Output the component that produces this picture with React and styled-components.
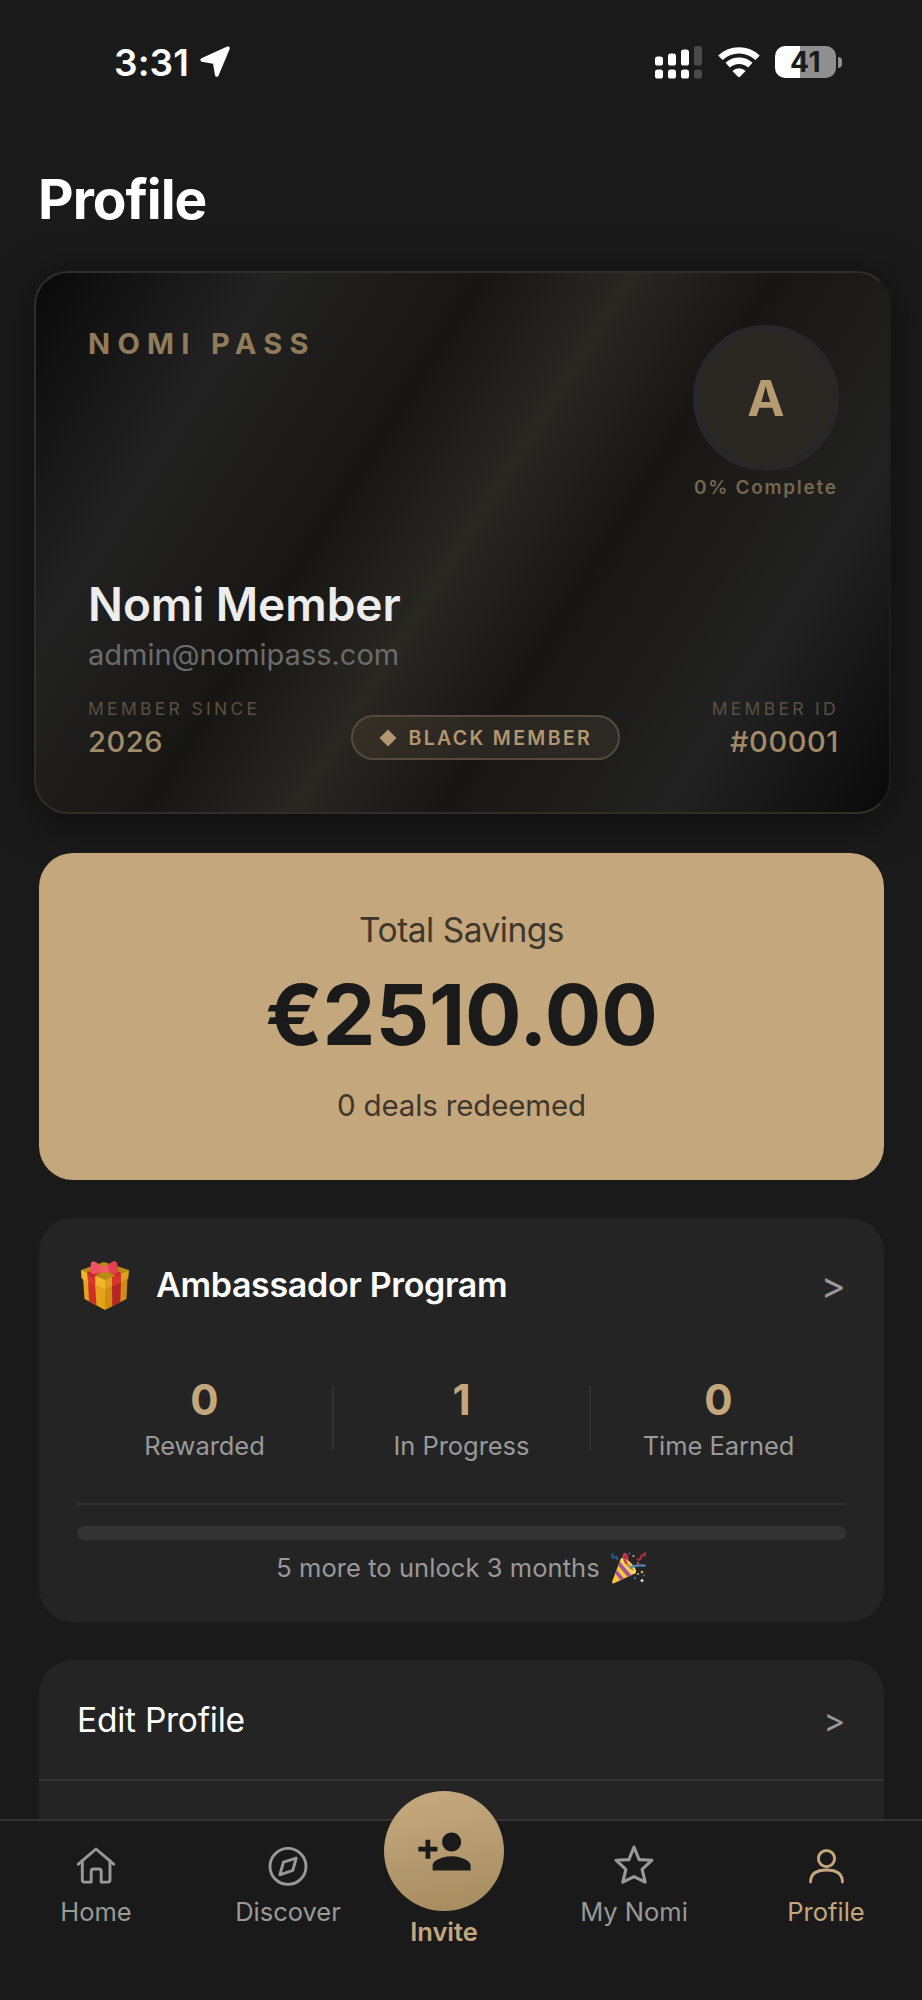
import React from "react";
import styled, { createGlobalStyle } from "styled-components";

const gold = "#c4a77d";

const GlobalStyle = createGlobalStyle`
  * { box-sizing: border-box; }
  body { margin: 0; background: #1a1a1a; }
`;

const Phone = styled.div`
  width: 922px;
  height: 2000px;
  display: flex;
  flex-direction: column;
  overflow: hidden;
  background: #1a1a1a;
  color: #fff;
  font-family: Inter, "Liberation Sans", sans-serif;
  white-space: nowrap;
`;

const Screen = styled.main`
  height: 1819px;
  flex: none;
  overflow: hidden;
`;

/* Status bar */
const StatusBar = styled.header`
  height: 124px;
  padding: 0 80px 0 114px;
  display: flex;
  align-items: center;
  justify-content: space-between;
`;

const StatusGroup = styled.div`
  display: flex;
  align-items: center;
  gap: ${(p) => p.$gap}px;
`;

const Clock = styled.span`
  padding-top: 2px;
  font-size: 37px;
  line-height: 44px;
  font-weight: 600;
  letter-spacing: 0.1px;
`;

const Battery = styled.div`
  display: flex;
  align-items: center;
  gap: 2px;
`;

const BatteryBody = styled.div`
  width: 61px;
  height: 32px;
  border-radius: 10px;
  background: linear-gradient(90deg, #fff 41%, #8f8f8f 41%);
  color: #1a1a1a;
  font-size: 28px;
  line-height: 32px;
  font-weight: 700;
  letter-spacing: 0.5px;
  text-align: center;
`;

const BatteryTip = styled.div`
  width: 4px;
  height: 11px;
  border-radius: 0 5px 5px 0;
  background: #8f8f8f;
`;

const Title = styled.h1`
  margin: 41px 0 38px 38px;
  font-size: 55px;
  line-height: 68px;
  font-weight: 700;
  letter-spacing: -1px;
`;

/* Membership card */
const PassCard = styled.section`
  width: 857px;
  height: 543px;
  margin-left: 34px;
  padding: 52px 50px 52px 52px;
  display: flex;
  flex-direction: column;
  border: 2px solid #302e2b;
  border-right-color: #1c1c1c;
  border-radius: 34px;
  background: linear-gradient(
    122.3deg,
    #090909 0%,
    #222222 20%,
    #171613 38%,
    #292722 50%,
    #171613 62%,
    #222222 81%,
    #090909 100%
  ) border-box;
  box-shadow: 0 8px 40px rgba(0, 0, 0, 0.5);
`;

const PassTop = styled.div`
  height: 251px;
  display: flex;
  justify-content: space-between;
`;

const PassBrand = styled.div`
  font-size: 29px;
  line-height: 38px;
  font-weight: 700;
  letter-spacing: 7.3px;
  color: #917b5b;
`;

const AvatarColumn = styled.div`
  width: 146px;
  display: flex;
  flex-direction: column;
  gap: 6px;
`;

const Avatar = styled.div`
  height: 146px;
  border: 6px solid #282628;
  border-radius: 50%;
  background: #2b2823;
  color: #b69a71;
  font-size: 50px;
  line-height: 134px;
  font-weight: 700;
  text-align: center;
`;

const Completion = styled.div`
  font-size: 19px;
  line-height: 22px;
  font-weight: 600;
  letter-spacing: 1.7px;
  text-indent: 1px;
  color: #756650;
`;

const MemberName = styled.div`
  font-size: 46px;
  line-height: 56px;
  font-weight: 600;
  letter-spacing: -0.05px;
  color: #ededed;
`;

const MemberEmail = styled.div`
  margin-top: 3px;
  font-size: 29px;
  line-height: 40px;
  color: #6b6b6b;
`;

const PassFooter = styled.div`
  flex: 1;
  display: flex;
  align-items: flex-end;
  justify-content: space-between;
`;

const Fact = styled.div`
  padding-bottom: 2px;
  text-align: ${(p) => p.$align || "left"};
`;

const FactLabel = styled.div`
  font-size: 17.5px;
  line-height: 20px;
  letter-spacing: 3.3px;
  color: #5b5040;
`;

const FactValue = styled.div`
  margin-top: 7px;
  font-size: 29px;
  line-height: 32px;
  font-weight: 500;
  letter-spacing: 0.6px;
  color: #a18a68;
`;

const TierBadge = styled.div`
  width: 269px;
  height: 45px;
  padding-left: 26px;
  display: flex;
  align-items: center;
  gap: 11px;
  border: 2px solid #554a3b;
  border-radius: 23px;
  background: linear-gradient(122deg, #372f26, #2a2722 45%, #2c2924);
  color: #b39770;
  font-size: 19.5px;
  line-height: 24px;
  font-weight: 600;
  letter-spacing: 2.35px;
`;

/* Savings */
const SavingsCard = styled.section`
  height: 327px;
  margin: 39px 38px 0 39px;
  padding-top: 55px;
  border-radius: 34px;
  background: ${gold};
  color: #1a1a1a;
  text-align: center;
`;

const SavingsLabel = styled.div`
  font-size: ${(p) => p.$size}px;
  line-height: 44px;
  letter-spacing: ${(p) => p.$spacing || 0}px;
  color: #3f372b;
`;

const SavingsAmount = styled.div`
  margin: 13px 0 18px;
  font-size: 84px;
  line-height: 100px;
  font-weight: 700;
  letter-spacing: -0.1px;
`;

/* Panels */
const Panel = styled.section`
  height: ${(p) => p.$height}px;
  margin: 38px 38px 0 39px;
  border-radius: 34px;
  background: #242424;
`;

const AmbassadorBody = styled.div`
  padding: 42px 38px 0;
`;

const AmbassadorHeader = styled.div`
  height: 50px;
  display: flex;
  align-items: center;
  padding-left: 3px;
`;

const AmbassadorTitle = styled.h2`
  flex: 1;
  margin: 0 0 0 26px;
  font-size: 34px;
  line-height: 50px;
  font-weight: 600;
  letter-spacing: -0.33px;
`;

const Chevron = styled.span`
  font-size: ${(p) => p.$size}px;
  line-height: 48px;
  color: #999;
`;

const Stats = styled.div`
  margin-top: 64px;
  height: 88px;
  display: flex;
  align-items: center;
`;

const Stat = styled.div`
  flex: 1;
  text-align: center;
`;

const StatNumber = styled.div`
  font-size: 42px;
  line-height: 50px;
  font-weight: 700;
  color: ${gold};
`;

const StatLabel = styled.div`
  margin-top: 5px;
  font-size: 25.5px;
  line-height: 32px;
  letter-spacing: -0.05px;
  color: #999;
`;

const StatDivider = styled.div`
  width: 2px;
  height: 64px;
  background: #313131;
`;

const Rule = styled.div`
  height: 2px;
  margin: 41px 0 21px;
  background: #313131;
`;

const ProgressTrack = styled.div`
  height: 14px;
  border-radius: 7px;
  background: #333;
`;

const ProgressNote = styled.div`
  margin-top: 10px;
  height: 36px;
  display: flex;
  align-items: center;
  justify-content: center;
  gap: 11px;
  font-size: 25.5px;
  line-height: 36px;
  letter-spacing: 0.06px;
  color: #999;
`;

const MenuRow = styled.div`
  height: 121px;
  padding: 0 39px 0 38px;
  display: flex;
  align-items: center;
  justify-content: space-between;
  border-bottom: 2px solid #333;
  font-size: 33.5px;
  letter-spacing: -0.25px;
`;

/* Tab bar */
const TabBar = styled.nav`
  height: 181px;
  flex: none;
  display: flex;
  border-top: 2px solid #333;
  background: #1a1a1a;
`;

const Tab = styled.div`
  width: 192px;
  padding-top: 21px;
  display: flex;
  flex-direction: column;
  align-items: center;
  font-size: 25.5px;
  line-height: 32px;
  color: ${(p) => (p.$active ? gold : "#999")};

  svg {
    margin-bottom: 6px;
  }
`;

const InviteTab = styled.div`
  width: 154px;
  margin-top: -30px;
  padding-right: 34px;
  display: flex;
  flex-direction: column;
  align-items: center;
  font-size: 25.5px;
  line-height: 32px;
  font-weight: 600;
  color: ${gold};
`;

const InviteButton = styled.div`
  width: 120px;
  height: 120px;
  margin-bottom: 5px;
  flex: none;
  display: flex;
  align-items: center;
  justify-content: center;
  border-radius: 50%;
  background: linear-gradient(170deg, #c4a77d 10%, #a68b5f 100%);
`;

function LocationArrow() {
  return (
    <svg width="32" height="32" viewBox="0 0 32 32">
      <path d="M29 2.2 L3.2 14 L15.6 16.3 L17.8 29 Z" fill="#fff" stroke="#fff" strokeWidth="3.6" strokeLinejoin="round" />
    </svg>
  );
}

function SignalBars() {
  const tops = [10.5, 7.5, 3.5, 0];
  return (
    <svg width="48" height="33" viewBox="0 0 48 33">
      {tops.map((top, i) => (
        <g key={top} fill={i === 3 ? "#4a4a4a" : "#fff"}>
          <rect x={i * 13} y={top} width="8" height={19.5 - top} rx="2.6" />
          <rect x={i * 13} y="23.5" width="8" height="9" rx="2.6" />
        </g>
      ))}
    </svg>
  );
}

function WifiIcon() {
  return (
    <svg width="42" height="32" viewBox="0 0 42 32" fill="none" stroke="#fff" strokeWidth="6.4">
      <path d="M2.4 11.8 A27 27 0 0 1 39.6 11.8" />
      <path d="M9.7 19.2 A16.6 16.6 0 0 1 32.3 19.2" />
      <path d="M14.4 25 A9.6 9.6 0 0 1 27.6 25 L22 30.8 Q21 31.7 20 30.8 Z" fill="#fff" stroke="none" />
    </svg>
  );
}

function GiftIcon() {
  return (
    <svg width="50" height="50" viewBox="0 0 50 50">
      <path d="M3 17 L25 28 L25 50 L4.5 39 Z" fill="#e5a31c" />
      <path d="M25 28 L47.5 17 L46.5 39 L25 50 Z" fill="#cf8d12" />
      <path d="M8 19.5 L15 23 L16.5 45.4 L9 41.4 Z" fill="#cf2f2c" />
      <path d="M32 24.5 L41 20 L40.3 42.3 L32.3 46.3 Z" fill="#b82427" />
      <path d="M1 10 L24 2 L49 10 L25 21 Z" fill="#b88a12" />
      <path d="M1 10 L25 20 L25 29 L1.5 18.5 Z" fill="#f2b62b" />
      <path d="M25 20 L49 10 L48.3 18.5 L25 29 Z" fill="#dda01d" />
      <path d="M7 12.5 L15 16 L15.5 24.8 L8 21.5 Z M32 17 L41 13.3 L41 21.8 L32 25.8 Z" fill="#dc3330" />
      <path d="M24 10 L12 18 L7 12.5 L17 9 Z M26 10 L38 17 L41 13 L34 9 Z" fill="#c8282d" />
      <path d="M22 7 C17 1.5 12 0 11 3 C11 6 9 9 11 13 C15 15.5 20 13 24 10 Z" fill="#ef5260" />
      <path d="M26 7 C31 1 36 0 37 3 C37 7 40 9 37 13.5 C33 14 28 12 25 10 Z" fill="#e5404e" />
      <path d="M20 6 L28 6 L29 12 L21 13 Z" fill="#f15d66" />
    </svg>
  );
}

function PartyPopper() {
  return (
    <svg width="36" height="32" viewBox="0 0 36 32">
      <path d="M10 6 L25 21 L2.5 31.5 Q0.5 31.8 1.2 29.4 Z" fill="#fac63d" />
      <path d="M8.6 9.6 L20.5 23.2 L16.8 24.9 L7.2 13.8 Z M5.6 17.8 L13 26.6 L9.6 28.3 L4.4 21.8 Z" fill="#a25594" />
      <ellipse cx="17.5" cy="13.5" rx="3.6" ry="10.2" transform="rotate(-45 17.5 13.5)" fill="#f7d774" />
      <ellipse cx="17.5" cy="13.5" rx="1.6" ry="7.4" transform="rotate(-45 17.5 13.5)" fill="#d99a2c" />
      <g fill="none" strokeLinecap="round" strokeWidth="2.2">
        <path d="M1.6 2.2 Q.5 6.5 3.7 5.2 Q6.5 4 6.4 7.5" stroke="#2f5591" />
        <path d="M15.5 11 Q11.5 5 13.2 2.2 Q15.2 1 16.6 7.5" stroke="#c93a50" />
        <path d="M26.5 7.5 Q30.7 8 29.8 4.5 Q31 2.6 33.8 3.2 L33.8 1.2" stroke="#a82f45" />
        <path d="M20 15.5 Q24 12.8 33.8 13.6" stroke="#4a86be" />
      </g>
      <g fill="#e0b43d">
        <circle cx="22.5" cy="4" r="1.1" />
        <circle cx="31" cy="20" r="1.3" />
        <circle cx="27" cy="22" r="1" />
      </g>
      <circle cx="18.5" cy="1.6" r="1.1" fill="#3f6cab" />
      <circle cx="33" cy="23.5" r="1.1" fill="#3f6cab" />
      <circle cx="24" cy="26" r="1.2" fill="#3f6cab" />
      <circle cx="27" cy="11" r="1.2" fill="#da4558" />
      <circle cx="31" cy="28.5" r="1.5" fill="#ead8cd" />
    </svg>
  );
}

function TabIcon({ children }) {
  return (
    <svg width="48" height="48" viewBox="0 0 48 48" fill="none" stroke="currentColor" strokeWidth="2.9" strokeLinecap="round" strokeLinejoin="round">
      {children}
    </svg>
  );
}

const HomeIcon = () => (
  <TabIcon>
    <path d="M6.3 22.2 L24 7 L41.7 22.2" />
    <path d="M10.3 18.9 V38.1 Q10.3 40.1 12.3 40.1 H19.2 V29.4 Q19.2 27 21.6 27 H26.8 Q29.2 27 29.2 29.4 V40.1 H36 Q38 40.1 38 38.1 V18.9" />
  </TabIcon>
);

const CompassIcon = () => (
  <TabIcon>
    <circle cx="24" cy="24.4" r="18" />
    <path d="M32.2 16.2 L28.8 28.4 L15.8 32.8 L19.5 20.1 Z" />
  </TabIcon>
);

const StarIcon = () => (
  <TabIcon>
    <path strokeWidth="3.1" d="M24 5 L29.1 17.6 L42 18.2 L32.1 27.3 L35.2 40.2 L24 34.6 L12.8 40.2 L15.9 27.3 L6 18.2 L18.9 17.6 Z" />
  </TabIcon>
);

const PersonIcon = () => (
  <TabIcon>
    <circle cx="24.5" cy="16.6" r="8.1" />
    <path d="M8.6 40 Q8.6 28 24.5 28 Q40.4 28 40.4 40" />
  </TabIcon>
);

const PersonAddIcon = () => (
  <svg width="57" height="57" viewBox="0 0 24 24" fill="#1a1a1a">
    <path d="M15 12c2.21 0 4-1.79 4-4s-1.79-4-4-4-4 1.79-4 4 1.79 4 4 4zm-9-2V7H4v3H1v2h3v3h2v-3h3v-2H6zm9 4c-2.67 0-8 1.34-8 4v2h16v-2c0-2.66-5.33-4-8-4z" />
  </svg>
);

const stats = [
  { value: "0", label: "Rewarded" },
  { value: "1", label: "In Progress" },
  { value: "0", label: "Time Earned" },
];

export default function App() {
  return (
    <Phone>
      <GlobalStyle />
      <Screen>
        <StatusBar>
          <StatusGroup $gap={10}>
            <Clock>3:31</Clock>
            <LocationArrow />
          </StatusGroup>
          <StatusGroup $gap={15}>
            <SignalBars />
            <WifiIcon />
            <Battery>
              <BatteryBody>41</BatteryBody>
              <BatteryTip />
            </Battery>
          </StatusGroup>
        </StatusBar>

        <Title>Profile</Title>

        <PassCard>
          <PassTop>
            <PassBrand>NOMI PASS</PassBrand>
            <AvatarColumn>
              <Avatar>A</Avatar>
              <Completion>0% Complete</Completion>
            </AvatarColumn>
          </PassTop>
          <MemberName>Nomi Member</MemberName>
          <MemberEmail>admin@nomipass.com</MemberEmail>
          <PassFooter>
            <Fact>
              <FactLabel>MEMBER SINCE</FactLabel>
              <FactValue>2026</FactValue>
            </Fact>
            <TierBadge>
              <svg width="18" height="18" viewBox="0 0 18 18">
                <path d="M9 .5 L17.5 9 L9 17.5 L.5 9 Z" fill="#b39770" />
              </svg>
              BLACK MEMBER
            </TierBadge>
            <Fact $align="right">
              <FactLabel>MEMBER ID</FactLabel>
              <FactValue>#00001</FactValue>
            </Fact>
          </PassFooter>
        </PassCard>

        <SavingsCard>
          <SavingsLabel $size={33.5} $spacing={-0.5}>Total Savings</SavingsLabel>
          <SavingsAmount>€2510.00</SavingsAmount>
          <SavingsLabel $size={29.5} $spacing={-0.15}>0 deals redeemed</SavingsLabel>
        </SavingsCard>

        <Panel $height={404}>
          <AmbassadorBody>
            <AmbassadorHeader>
              <GiftIcon />
              <AmbassadorTitle>Ambassador Program</AmbassadorTitle>
              <Chevron $size={38}>&gt;</Chevron>
            </AmbassadorHeader>
            <Stats>
              {stats.map((s, i) => (
                <React.Fragment key={s.label}>
                  {i > 0 && <StatDivider />}
                  <Stat>
                    <StatNumber>{s.value}</StatNumber>
                    <StatLabel>{s.label}</StatLabel>
                  </Stat>
                </React.Fragment>
              ))}
            </Stats>
            <Rule />
            <ProgressTrack />
            <ProgressNote>
              5 more to unlock 3 months
              <PartyPopper />
            </ProgressNote>
          </AmbassadorBody>
        </Panel>

        <Panel $height={400}>
          <MenuRow>
            Edit Profile
            <Chevron $size={33}>&gt;</Chevron>
          </MenuRow>
        </Panel>
      </Screen>

      <TabBar>
        <Tab><HomeIcon />Home</Tab>
        <Tab><CompassIcon />Discover</Tab>
        <InviteTab>
          <InviteButton><PersonAddIcon /></InviteButton>
          Invite
        </InviteTab>
        <Tab><StarIcon />My Nomi</Tab>
        <Tab $active><PersonIcon />Profile</Tab>
      </TabBar>
    </Phone>
  );
}
